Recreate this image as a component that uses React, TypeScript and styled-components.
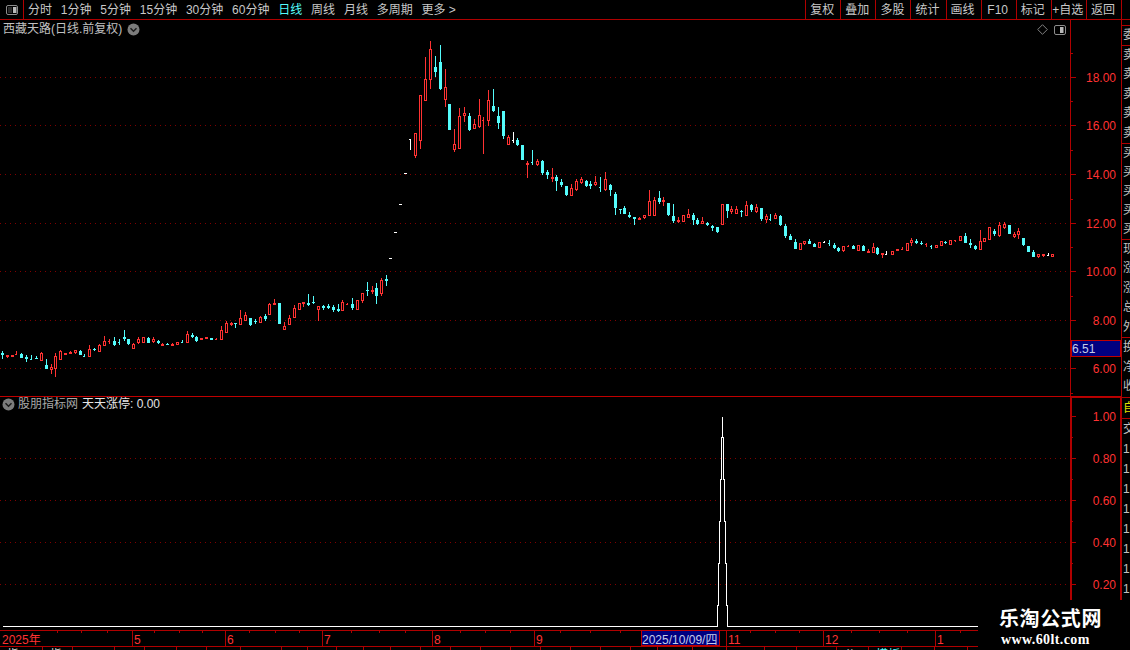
import React from 'react';
import styled, { createGlobalStyle } from 'styled-components';

const RED = '#ff3232';
const CYAN = '#54fcfc';
const LINE = '#b00000';
const GRID = '#800000';

const Global = createGlobalStyle`
  html, body { margin: 0; padding: 0; background: #000; }
  body { font-family: "Liberation Sans", "Noto Sans CJK SC", sans-serif; font-size: 12px; overflow: hidden; }
`;

const Screen = styled.div`
  position: relative; width: 1130px; height: 650px; overflow: hidden; background: #000;
  display: flex; flex-direction: column;
`;
const Toolbar = styled.div`
  flex: none; height: 19px; display: flex; align-items: center; justify-content: space-between;
  border-bottom: 1px solid ${LINE};
`;
const LeftTools = styled.div`display: flex; align-items: center; height: 100%;`;
const PanelToggle = styled.div`
  width: 23px; height: 100%; box-sizing: content-box; display: flex; align-items: center; justify-content: center;
  border-right: 1px solid ${LINE}; margin-right: 4px;
`;
const Tabs = styled.div`display: flex; gap: 8.8px; align-items: center;`;
const Tab = styled.span<{ $active?: boolean }>`
  color: ${p => (p.$active ? CYAN : '#c8c8c8')}; font-size: 12px; line-height: 19px; padding-top: 2px; white-space: nowrap;
`;
const RightTools = styled.div`display: flex; height: 100%; margin-right: 8px; border-right: 1px solid ${LINE};`;
const ToolButton = styled.div`
  width: 34.1px; border-left: 1px solid ${LINE}; color: #c8c8c8; font-size: 12px; line-height: 20px;
  text-align: center; text-indent: -2px; white-space: nowrap;
`;
const Body = styled.div`flex: 1; display: flex; min-height: 0;`;
const Main = styled.div`
  flex: none; width: 1121px; border-right: 1px solid ${LINE}; display: flex; flex-direction: column;
`;
const Pane = styled.div<{ $h: number }>`
  position: relative; flex: none; height: ${p => p.$h}px;
`;
const PricePane = styled(Pane)`border-bottom: 1px solid #c00000;`;
const Chart = styled.svg`display: block; width: 100%; height: 100%;`;
const PaneHeader = styled.div`
  position: absolute; left: 3px; top: 2px; display: flex; align-items: center; gap: 5px;
  color: #c0c0c0; font-size: 12px; line-height: 15px; white-space: nowrap;
`;
const IndicatorHeader = styled(PaneHeader)`left: 2px; top: 0; gap: 3px;`;
const IndicatorName = styled.span`color: #a8a8a8;`;
const IndicatorValue = styled.span`color: #e4e4e4; margin-left: 1px;`;
const PaneTools = styled.div`
  position: absolute; right: 55px; top: 4px; display: flex; align-items: center; gap: 6px;
`;
const TabStrip = styled.div`flex: 1; display: flex; overflow: hidden; min-height: 0;`;
const BottomTab = styled.div<{ $w: number; $color?: string }>`
  flex: none; width: ${p => p.$w}px; box-sizing: border-box; border-right: 1px solid ${LINE};
  color: ${p => p.$color || '#d8d8d8'}; font-size: 12px; line-height: 16px; padding: 0 0 0 7px; white-space: nowrap;
  overflow: hidden;
`;
const Side = styled.div`flex: 1; overflow: hidden; display: flex; flex-direction: column;`;
const SideGap = styled.div<{ $h: number }>`
  flex: none; height: ${p => p.$h}px; box-sizing: border-box; border-bottom: 1px solid ${LINE};
`;
const SideGroup = styled.div`flex: none; border-bottom: 1px solid ${LINE}; display: flex; flex-direction: column;`;
const SideCell = styled.div<{ $h: number; $color?: string }>`
  flex: none; height: ${p => p.$h}px; line-height: ${p => p.$h}px; padding-left: 1px;
  color: ${p => p.$color || '#c0c0c0'}; font-size: 12px; white-space: nowrap; overflow: hidden;
`;
const Watermark = styled.div`
  position: absolute; left: 978px; top: 600px; width: 152px; height: 50px; background: #000;
  display: flex; flex-direction: column; align-items: flex-start; padding: 7px 0 0 21px; box-sizing: border-box;
`;
const MarkTitle = styled.div`
  color: #fff; font-family: "Noto Sans CJK SC", sans-serif; font-weight: 700; font-size: 20px; line-height: 22px;
  letter-spacing: 0.6px; white-space: nowrap;
`;
const MarkUrl = styled.div`
  color: #fff; font-family: "Liberation Serif", serif; font-weight: 700; font-size: 14px; line-height: 22px;
  letter-spacing: 0.4px; margin-left: 2px; white-space: nowrap;
`;

type Kind = 'R' | 'F' | 'C' | 'W' | 'r' | 'c' | 'w';
type Row = [number, number, number, number, number, Kind];
const seg = (ox: number, rows: Row[]): Row[] =>
  rows.map(r => [Math.floor(ox + r[0] / 3), r[1], r[2], r[3], r[4], r[5]] as Row);

const candles: Row[] = [
  ...seg(0, [
    [7,351,359,353,355,'C'],[22,355,358,355,357,'F'],[37,355,357,355,357,'F'],[49,351,355,354,355,'r'],
    [64,353,358,354,358,'C'],[79,355,362,357,359,'C'],[94,355,360,359,360,'c'],[109,356,359,358,359,'C'],
    [124,352,361,353,361,'R'],[139,359,369,365,369,'C'],[154,364,374,367,370,'R'],[166,353,377,356,369,'R'],
    [181,350,360,351,360,'R'],[196,353,355,353,355,'F'],[211,351,354,352,354,'F'],[226,350,354,350,353,'R'],
    [241,350,355,351,355,'C'],[254,354,357,356,357,'c'],[268,345,357,349,357,'R'],[283,348,351,349,350,'C'],
    [298,344,352,345,352,'R'],[313,336,346,341,346,'R'],[328,339,344,341,342,'r'],[343,337,346,341,345,'C'],
    [358,339,345,342,343,'c'],[373,330,341,337,339,'C'],[385,339,345,339,344,'C'],[400,343,349,344,349,'R'],
    [415,337,344,339,343,'R'],[430,337,343,337,343,'R'],[445,337,343,338,343,'C'],[460,337,343,339,342,'R'],
    [475,340,344,341,343,'C'],[487,343,346,344,346,'F'],[502,343,345,344,345,'C'],[517,343,346,344,346,'F'],
    [532,342,345,342,345,'R'],[547,340,343,342,343,'c'],[562,331,343,334,343,'R'],[577,333,338,335,337,'C'],
    [589,336,342,337,341,'C'],
  ]),
  ...seg(200, [
    [4,338,340,338,340,'F'],[19,337,339,337,339,'F'],[34,338,340,338,340,'C'],[49,338,340,339,340,'r'],
    [64,326,340,330,340,'R'],[79,321,333,323,333,'R'],[94,322,326,323,325,'F'],[106,323,328,323,324,'C'],
    [121,310,325,318,325,'R'],[136,312,321,315,321,'R'],[151,318,326,318,325,'C'],[166,319,324,321,322,'C'],
    [181,316,323,317,323,'R'],[196,314,321,316,319,'C'],[208,303,315,304,315,'R'],[223,299,305,303,305,'F'],
    [238,303,324,303,324,'C'],[253,322,330,326,330,'R'],[268,315,325,318,325,'R'],[283,305,318,308,318,'R'],
    [298,303,310,303,310,'R'],[310,302,307,302,304,'F'],[325,294,306,303,305,'C'],[340,296,304,302,303,'C'],
    [355,306,321,306,310,'R'],[370,305,310,306,308,'C'],[385,304,309,306,308,'C'],[400,305,312,307,310,'C'],
    [415,304,312,309,311,'C'],[427,300,311,302,311,'R'],[442,303,305,304,305,'r'],[457,298,310,304,308,'C'],
    [472,300,310,300,310,'R'],[487,293,303,293,301,'R'],[502,282,296,290,291,'C'],[517,286,294,290,292,'F'],
    [529,283,304,288,296,'C'],[544,278,296,280,294,'R'],[559,275,286,279,281,'C'],
  ]),
  ...seg(390, [
    [0,258,259,258,259,'W'],[15,232,233,232,233,'W'],[30,204,205,204,205,'W'],[45,173,174,173,174,'W'],
    [60,139,150,139,140,'w'],[76,133,158,133,156,'R'],[91,95,149,95,141,'R'],[106,57,101,79,101,'R'],
    [121,41,89,49,80,'R'],[136,56,77,67,72,'C'],[151,45,90,62,89,'C'],[166,69,107,87,100,'R'],
    [178,104,130,104,130,'C'],[193,129,152,144,150,'R'],[208,108,149,116,149,'R'],[223,107,122,113,116,'R'],
    [238,113,131,116,130,'C'],[253,119,129,124,129,'R'],[268,99,128,115,127,'R'],[280,117,154,120,120,'r'],
    [295,90,126,100,121,'R'],[310,89,112,106,111,'C'],[325,107,129,116,123,'C'],[340,111,139,111,136,'C'],
    [355,135,145,137,145,'R'],[370,132,143,140,141,'w'],[382,138,146,140,145,'C'],[397,145,160,145,160,'C'],
    [412,161,178,163,165,'F'],[427,150,165,162,163,'c'],[442,159,166,161,165,'R'],[457,160,175,161,173,'C'],
    [472,170,179,172,175,'C'],
  ]),
  ...seg(540, [
    [37,168,182,177,179,'F'],[49,175,191,177,181,'C'],[64,179,187,182,185,'C'],[79,186,196,186,195,'C'],
    [94,184,196,188,196,'R'],[109,179,191,181,190,'R'],[124,177,184,179,183,'R'],[139,180,187,181,186,'C'],
    [151,181,189,184,186,'C'],[166,176,186,182,185,'R'],[181,177,192,187,188,'c'],[196,172,191,179,190,'R'],
    [211,184,196,185,190,'C'],[226,192,215,194,208,'C'],[241,209,214,209,210,'C'],[253,206,214,208,214,'C'],
    [268,212,218,215,217,'C'],[283,217,225,217,219,'C'],[298,217,220,218,220,'F'],[313,215,219,215,218,'R'],
    [328,190,216,201,216,'R'],[343,197,216,200,216,'R'],[358,191,204,198,202,'C'],[370,197,206,200,202,'F'],
    [385,203,216,203,215,'C'],[400,204,223,216,221,'C'],[415,217,223,220,222,'F'],[430,215,222,215,222,'R'],
    [445,209,218,214,218,'R'],[460,213,225,215,220,'C'],[472,218,225,220,224,'C'],[487,217,224,221,224,'R'],
    [502,222,226,223,225,'C'],[517,225,231,226,228,'C'],[532,227,233,227,232,'C'],[547,204,225,204,225,'R'],
    [562,204,218,204,211,'C'],[574,206,214,209,212,'R'],[589,206,214,209,214,'R'],[604,210,217,211,212,'C'],
    [619,201,216,205,216,'R'],[634,204,212,205,210,'C'],[649,204,213,207,212,'R'],[664,208,221,208,219,'C'],
    [679,214,223,216,220,'R'],[691,214,221,219,220,'c'],[706,213,219,215,219,'R'],[721,215,226,216,225,'C'],
    [736,224,238,226,236,'C'],[751,234,240,236,240,'C'],[766,239,249,242,249,'C'],
  ]),
  ...seg(780, [
    [61,243,250,243,250,'R'],[73,241,245,241,244,'R'],[88,239,244,241,244,'C'],[103,243,247,244,247,'C'],
    [118,242,248,242,248,'R'],[132,241,243,242,243,'w'],[148,240,246,243,244,'c'],[163,243,249,245,248,'C'],
    [175,247,252,248,251,'C'],[190,246,252,246,251,'R'],[205,245,247,246,247,'r'],[220,245,249,246,249,'C'],
    [235,245,251,245,251,'R'],[250,245,251,246,251,'C'],[265,249,253,251,253,'F'],[280,243,253,247,253,'R'],
    [292,247,255,248,254,'C'],[307,253,258,253,255,'F'],[320,251,255,254,255,'w'],[337,251,255,251,255,'R'],
    [352,249,251,249,251,'F'],[367,247,250,249,250,'r'],[382,243,251,243,251,'R'],[394,238,246,240,243,'R'],
    [409,239,244,241,243,'C'],[424,241,245,243,244,'C'],[439,243,247,244,245,'r'],[454,245,249,246,247,'c'],
    [469,245,248,245,248,'R'],[484,241,246,241,246,'R'],[496,241,244,242,243,'C'],[511,240,245,240,245,'R'],
    [526,240,242,240,241,'r'],[541,236,241,236,241,'R'],[556,233,243,236,243,'C'],[571,239,248,243,245,'C'],
    [586,245,250,246,249,'C'],[601,230,250,241,250,'R'],[613,238,242,238,242,'R'],[628,227,240,227,240,'R'],
    [643,229,236,231,234,'C'],[658,222,237,225,236,'R'],[673,222,229,224,228,'R'],[688,225,234,225,234,'C'],
    [703,232,238,234,237,'R'],[715,228,239,231,235,'R'],[730,238,246,238,245,'C'],[745,246,252,246,252,'C'],
    [760,250,257,252,257,'C'],[775,254,258,254,257,'R'],[790,254,257,254,256,'F'],[804,253,256,255,256,'w'],
    [817,254,257,254,257,'R'],
  ]),
];

const colorOf = (k: Kind) =>
  k === 'R' || k === 'F' || k === 'r' ? RED : k === 'C' || k === 'c' ? CYAN : '#fff';

const Candle = ({ d }: { d: Row }) => {
  const [x, hi, lo, top, bot, k] = d;
  const color = colorOf(k);
  if (k === 'r' || k === 'c' || k === 'w') {
    return (
      <g fill={color}>
        <rect x={x} y={hi} width={1} height={Math.max(lo - hi, 1)} />
        <rect x={x - 1} y={top} width={1} height={1} />
      </g>
    );
  }
  return (
    <g>
      <rect x={x} y={hi} width={1} height={Math.max(lo - hi, 1)} fill={color} />
      {k === 'R' ? (
        <rect x={x - 0.5} y={top + 0.5} width={2} height={Math.max(bot - top - 1, 1)} fill="#000" stroke={color} />
      ) : k === 'W' ? (
        <rect x={x - 1} y={top} width={3} height={1} fill={color} />
      ) : (
        <rect x={x - 1} y={top} width={3} height={Math.max(bot - top, 1)} fill={color} />
      )}
    </g>
  );
};

const priceGrid: [number, string][] = [
  [77, '18.00'], [125, '16.00'], [174, '14.00'], [223, '12.00'], [271, '10.00'], [320, '8.00'], [368, '6.00'],
];
const priceMinor = [53, 101, 150, 199, 247, 296, 344, 393];
const indGrid: [number, string][] = [[458, '0.80'], [500, '0.60'], [542, '0.40'], [584, '0.20']];
const indMinor = [437, 479, 521, 563];

const spike =
  'M2.5 626.5H717.5V605.5H718.5V563.5H719.5V521.5H720.5V479.5H721.5V437.5H722.5V416.5V437.5H723.5V479.5H724.5V521.5H725.5V563.5H726.5V605.5H727.5V626.5H978';

const Chevron = () => (
  <svg width="13" height="13" viewBox="0 0 13 13">
    <circle cx="6.5" cy="6.5" r="6" fill="#7c7c7c" />
    <path d="M3.5 5.2 6.5 8.2 9.5 5.2" fill="none" stroke="#1c1c1c" strokeWidth="1.5" />
  </svg>
);
const SplitIcon = ({ side }: { side: 'left' | 'right' }) => (
  <svg width="12" height="10" viewBox="0 0 12 10">
    <rect x="0.5" y="0.5" width="11" height="9" rx="1.5" fill="#000" stroke="#8c8c8c" />
    <rect x={side === 'left' ? 7 : 6} y="2" width="3.5" height="6" fill="#b8b8b8" />
    {side === 'left' && <rect x="2" y="2" width="4" height="6" fill="#2c2c2c" />}
  </svg>
);

const timeLabels: [number, string][] = [
  [2, '2025年'], [134, '5'], [227, '6'], [324, '7'], [434, '8'], [536, '9'], [728, '11'], [825, '12'], [937, '1'],
];
const timeSeps = [132, 225, 322, 432, 534, 726, 823, 935];
const timeTicks = [57, 81, 107, 154, 179, 202, 249, 275, 299, 351, 379, 405, 460, 485, 510, 560, 590, 620, 750, 775, 799, 851, 879, 907, 960];

const bottomTabs: [number, string?, string?][] = [
  [43, '指'], [30, '指'], [42], [30], [32], [30], [34], [41], [26], [29], [27], [27],
  [30], [30], [30], [30], [30], [30], [30], [30], [27], [35], [34], [38], [32], [40], [32, '公'], [33, '模板', CYAN], [33], [33], [40],
];

const tabs = ['分时', '1分钟', '5分钟', '15分钟', '30分钟', '60分钟', '日线', '周线', '月线', '多周期', '更多 >'];
const tools = ['复权', '叠加', '多股', '统计', '画线', 'F10', '标记', '+自选', '返回'];

export default function App() {
  return (
    <Screen>
      <Global />
      <Toolbar>
        <LeftTools>
          <PanelToggle><SplitIcon side="left" /></PanelToggle>
          <Tabs>
            {tabs.map(t => <Tab key={t} $active={t === '日线'}>{t}</Tab>)}
          </Tabs>
        </LeftTools>
        <RightTools>
          {tools.map(t => <ToolButton key={t}>{t}</ToolButton>)}
        </RightTools>
      </Toolbar>
      <Body>
        <Main>
          <PricePane $h={376}>
            <Chart viewBox="0 20 1121 376" shapeRendering="crispEdges" fontFamily="Liberation Sans" fontSize="12">
              {priceGrid.map(([y]) => (
                <line key={y} x1="0" x2="1067" y1={y + 0.5} y2={y + 0.5} stroke={GRID} strokeDasharray="1 4" />
              ))}
              {candles.map((d, i) => <Candle key={i} d={d} />)}
              <rect x="1070" y="20" width="1" height="376" fill={LINE} />
              {priceGrid.map(([y, label]) => (
                <g key={y}>
                  <rect x="1070" y={y} width="6" height="1" fill={LINE} />
                  <text x="1116" y={y + 5} textAnchor="end" fill={RED}>{label}</text>
                </g>
              ))}
              {priceMinor.map(y => <rect key={y} x="1070" y={y} width="3" height="1" fill={LINE} />)}
              <rect x="1071.5" y="340.5" width="49" height="16" fill="#000080" stroke="#c00000" />
              <text x="1072" y="352.5" fill="#c4cce8">6.51</text>
            </Chart>
            <PaneHeader>
              <span>西藏天路(日线.前复权)</span>
              <Chevron />
            </PaneHeader>
            <PaneTools>
              <svg width="11" height="11" viewBox="0 0 11 11">
                <path d="M5.5 .7 10.3 5.5 5.5 10.3 .7 5.5Z" fill="none" stroke="#808080" />
              </svg>
              <SplitIcon side="right" />
            </PaneTools>
          </PricePane>
          <Pane $h={233}>
            <Chart viewBox="0 397 1121 233" shapeRendering="crispEdges" fontFamily="Liberation Sans" fontSize="12">
              {indGrid.map(([y]) => (
                <line key={y} x1="0" x2="1067" y1={y + 0.5} y2={y + 0.5} stroke={GRID} strokeDasharray="1 4" />
              ))}
              <path d={spike} fill="none" stroke="#fff" />
              <rect x="1070" y="397" width="2" height="203" fill={LINE} />
              <rect x="1070" y="397" width="51" height="1" fill={LINE} />
              <rect x="1120" y="397" width="1" height="203" fill={LINE} />
              <rect x="1070" y="416" width="6" height="1" fill={LINE} />
              <text x="1116" y="421" textAnchor="end" fill={RED}>1.00</text>
              {indGrid.map(([y, label]) => (
                <g key={y}>
                  <rect x="1070" y={y} width="6" height="1" fill={LINE} />
                  <text x="1116" y={y + 5} textAnchor="end" fill={RED}>{label}</text>
                </g>
              ))}
              {indMinor.map(y => <rect key={y} x="1070" y={y} width="3" height="1" fill={LINE} />)}
            </Chart>
            <IndicatorHeader>
              <Chevron />
              <IndicatorName>股朋指标网</IndicatorName>
              <IndicatorValue>天天涨停: 0.00</IndicatorValue>
            </IndicatorHeader>
          </Pane>
          <Pane $h={17}>
            <Chart viewBox="0 630 1121 17" shapeRendering="crispEdges" fontFamily="Liberation Sans" fontSize="12">
              <rect x="0" y="630" width="978" height="1" fill={LINE} />
              <rect x="0" y="646" width="978" height="1" fill={LINE} />
              {timeSeps.map(x => <rect key={x} x={x} y="630" width="1" height="16" fill={LINE} />)}
              {timeTicks.map(x => <rect key={x} x={x} y="631" width="1" height="2" fill={LINE} />)}
              {timeLabels.map(([x, t]) => (
                <text key={x} x={x} y="644" fill={RED} fontFamily="Liberation Sans, Noto Sans CJK SC">{t}</text>
              ))}
              <rect x="641.5" y="630.5" width="78" height="15" fill="#000080" stroke="#c00000" />
              <text x="642" y="644" fill="#c4cce8" fontFamily="Liberation Sans, Noto Sans CJK SC">2025/10/09/四</text>
            </Chart>
          </Pane>
          <TabStrip>
            {bottomTabs.map(([w, t, c], i) => <BottomTab key={i} $w={w} $color={c}>{t}</BottomTab>)}
          </TabStrip>
        </Main>
        <Side>
          <SideGap $h={6} />
          <SideGroup><SideCell $h={19}>委</SideCell></SideGroup>
          <SideGroup>{[0, 1, 2, 3, 4].map(i => <SideCell key={i} $h={19.4}>卖</SideCell>)}</SideGroup>
          <SideGroup>{[0, 1, 2, 3, 4].map(i => <SideCell key={i} $h={19}>买</SideCell>)}</SideGroup>
          <SideGroup>{['现', '涨', '涨', '总', '外'].map((t, i) => <SideCell key={i} $h={19.4}>{t}</SideCell>)}</SideGroup>
          <SideGroup>{['换', '净', '收'].map((t, i) => <SideCell key={i} $h={19.7}>{t}</SideCell>)}</SideGroup>
          <SideGroup><SideCell $h={20} $color="#e0e000">自</SideCell></SideGroup>
          <SideCell $h={20}>交</SideCell>
          {[0, 1, 2, 3, 4, 5, 6, 7].map(i => <SideCell key={i} $h={20}>1</SideCell>)}
        </Side>
      </Body>
      <Watermark>
        <MarkTitle>乐淘公式网</MarkTitle>
        <MarkUrl>www.60lt.com</MarkUrl>
      </Watermark>
    </Screen>
  );
}
